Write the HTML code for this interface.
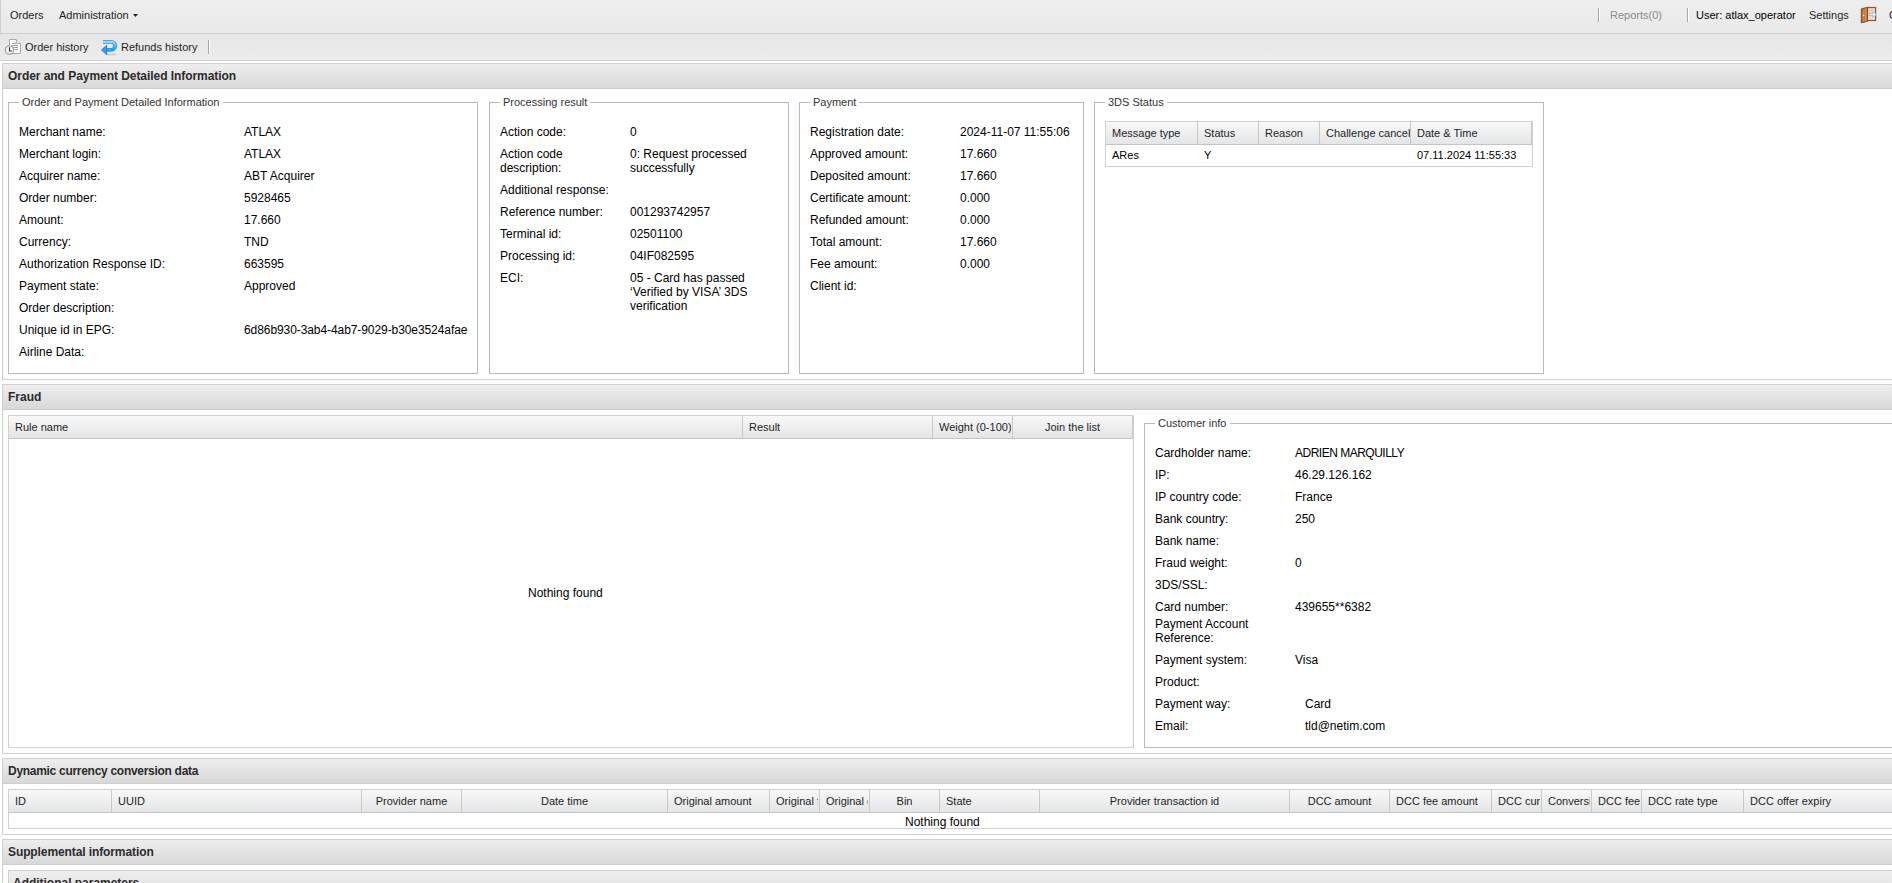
<!DOCTYPE html><html><head><meta charset="utf-8"><style>
*{margin:0;padding:0;box-sizing:border-box}
html,body{width:1892px;height:883px;overflow:hidden;background:#fff}
body{position:relative;font-family:"Liberation Sans",sans-serif;color:#000}
.t{position:absolute;white-space:pre}
.r{position:absolute}
</style></head><body><div class="r" style="left:0px;top:0px;width:1892px;height:34px;background:linear-gradient(#eeeeee,#e9e9e9);border-left:1px solid #d0d0d0;border-bottom:1px solid #d0d0d0"></div>
<div class="t" style="left:10px;top:9px;font-size:11px;line-height:13px;color:#1e1e1e;">Orders</div>
<div class="t" style="left:59px;top:9px;font-size:11px;line-height:13px;color:#1e1e1e;">Administration</div>
<svg class="r" style="left:133px;top:14px" width="6" height="4"><path d="M0,0H5L2.5,3Z" fill="#222"/></svg>
<div class="r" style="left:1598px;top:8px;width:1px;height:14px;background:#aba795"></div>
<div class="r" style="left:1599px;top:8px;width:1px;height:14px;background:#fff"></div>
<div class="t" style="left:1610px;top:9px;font-size:11px;line-height:13px;color:#8c8c8c;">Reports(0)</div>
<div class="r" style="left:1687px;top:8px;width:1px;height:14px;background:#aba795"></div>
<div class="r" style="left:1688px;top:8px;width:1px;height:14px;background:#fff"></div>
<div class="t" style="left:1696px;top:9px;font-size:11px;line-height:13px;color:#000;">User: atlax_operator</div>
<div class="t" style="left:1809px;top:9px;font-size:11px;line-height:13px;color:#1e1e1e;">Settings</div>
<svg class="r" style="left:1860px;top:6px" width="18" height="18" viewBox="0 0 18 18">
<defs><linearGradient id="dg" x1="0" y1="0" x2="1" y2="0"><stop offset="0" stop-color="#b5642e"/><stop offset="1" stop-color="#d48848"/></linearGradient>
<linearGradient id="fg" x1="0" y1="0" x2="1" y2="1"><stop offset="0" stop-color="#c9c9c9"/><stop offset="1" stop-color="#ececec"/></linearGradient></defs>
<rect x="7.3" y="1.5" width="8.3" height="13" fill="url(#fg)" stroke="#9a5026" stroke-width="1.2"/>
<path d="M1.3,16.8 L7.4,15.4 L7.4,1.3 L1.3,2.9 Z" fill="url(#dg)" stroke="#7f3f1c" stroke-width="0.9"/>
<path d="M3.3,3.8 V15.8 M5.4,3.2 V15.3" stroke="#e09a5c" stroke-width="0.7"/>
<path d="M9.5,7.6 H13 V5.6 L16.4,8.4 L13,11.3 V9.3 H9.5 Z" fill="#fafafa" stroke="#a0a0a0" stroke-width="0.7"/>
<rect x="2.9" y="8.8" width="1.3" height="1.3" fill="#f5f5f5"/>
</svg>
<div class="t" style="left:1889px;top:9px;font-size:11px;line-height:13px;color:#1e1e1e;">Change password</div>
<div class="r" style="left:0px;top:34px;width:1892px;height:27px;background:linear-gradient(#e6e6e6,#ececec);border-bottom:1px solid #d0d0d0"></div>
<svg class="r" style="left:4px;top:38px" width="18" height="18" viewBox="0 0 18 18">
<path d="M5.5,1.5 H12.5 L16.5,5.5 V15.5 H5.5 Z" fill="#fbfbfb" stroke="#a8a8a8" stroke-width="1"/>
<path d="M12.5,1.5 V5.5 H16.5" fill="#f4f4f4" stroke="#b0b0b0" stroke-width="1"/>
<path d="M8,5.5 H12.5 M8,7.5 H14 M9,9.5 H14 M10.5,11.5 H14" stroke="#a0a0a0" stroke-width="1"/>
<circle cx="5.5" cy="12" r="4.2" fill="#f3f3ef" stroke="#a6a6a6" stroke-width="1.3"/>
<path d="M5.5,9.3 V13 H8" stroke="#3a3a3a" stroke-width="1.1" fill="none"/>
</svg>
<div class="t" style="left:25px;top:41px;font-size:11px;line-height:13px;color:#1e1e1e;">Order history</div>
<svg class="r" style="left:100px;top:38px" width="18" height="18" viewBox="0 0 18 18">
<defs><linearGradient id="rg" x1="0" y1="0" x2="0" y2="1"><stop offset="0" stop-color="#9ad8fb"/><stop offset="1" stop-color="#16a9f6"/></linearGradient></defs>
<ellipse cx="10.5" cy="16.6" rx="5.5" ry="1" fill="#b8b8b8" opacity="0.55"/>
<path d="M3,3.9 H11.2 A4,4 0 0 1 11.2,11.9 H6.3" stroke="#3b8fdc" stroke-width="3.9" fill="none"/>
<path d="M3,3.9 H11.2 A4,4 0 0 1 11.2,11.9 H6.3" stroke="url(#rg)" stroke-width="2.1" fill="none"/>
<path d="M1.5,12 L6.7,7.2 V16.7 Z" fill="#18a6f4" stroke="#2c7fd0" stroke-width="0.9" stroke-linejoin="round"/>
</svg>
<div class="t" style="left:121px;top:41px;font-size:11px;line-height:13px;color:#1e1e1e;">Refunds history</div>
<div class="r" style="left:208px;top:40px;width:1px;height:14px;background:#aba795"></div>
<div class="r" style="left:209px;top:40px;width:1px;height:14px;background:#fff"></div>
<div class="r" style="left:2px;top:63px;width:1892px;height:317px;border:1px solid #d0d0d0;border-right:none;background:#fff"></div>
<div class="r" style="left:3px;top:64px;width:1891px;height:25px;background:linear-gradient(#eeeeee,#d8d8d8);border-bottom:1px solid #cecece"></div>
<div class="t" style="left:8px;top:69px;font-size:12px;line-height:14px;color:#2b2b2b;font-weight:bold;letter-spacing:-0.05px;">Order and Payment Detailed Information</div>
<div class="r" style="left:8px;top:102px;width:470px;height:272px;border:1px solid #b5b8c8;"></div>
<div class="r" style="left:19px;top:101px;width:204px;height:3px;background:#fff"></div>
<div class="t" style="left:22px;top:96px;font-size:11px;line-height:13px;color:#333;">Order and Payment Detailed Information</div>
<div class="t" style="left:19px;top:125px;font-size:12px;line-height:14px;">Merchant name:</div>
<div class="t" style="left:244px;top:125px;font-size:12px;line-height:14px;">ATLAX</div>
<div class="t" style="left:19px;top:147px;font-size:12px;line-height:14px;">Merchant login:</div>
<div class="t" style="left:244px;top:147px;font-size:12px;line-height:14px;">ATLAX</div>
<div class="t" style="left:19px;top:169px;font-size:12px;line-height:14px;">Acquirer name:</div>
<div class="t" style="left:244px;top:169px;font-size:12px;line-height:14px;">ABT Acquirer</div>
<div class="t" style="left:19px;top:191px;font-size:12px;line-height:14px;">Order number:</div>
<div class="t" style="left:244px;top:191px;font-size:12px;line-height:14px;">5928465</div>
<div class="t" style="left:19px;top:213px;font-size:12px;line-height:14px;">Amount:</div>
<div class="t" style="left:244px;top:213px;font-size:12px;line-height:14px;">17.660</div>
<div class="t" style="left:19px;top:235px;font-size:12px;line-height:14px;">Currency:</div>
<div class="t" style="left:244px;top:235px;font-size:12px;line-height:14px;">TND</div>
<div class="t" style="left:19px;top:257px;font-size:12px;line-height:14px;">Authorization Response ID:</div>
<div class="t" style="left:244px;top:257px;font-size:12px;line-height:14px;">663595</div>
<div class="t" style="left:19px;top:279px;font-size:12px;line-height:14px;">Payment state:</div>
<div class="t" style="left:244px;top:279px;font-size:12px;line-height:14px;">Approved</div>
<div class="t" style="left:19px;top:301px;font-size:12px;line-height:14px;">Order description:</div>
<div class="t" style="left:19px;top:323px;font-size:12px;line-height:14px;">Unique id in EPG:</div>
<div class="t" style="left:244px;top:323px;font-size:12px;line-height:14px;letter-spacing:-0.08px;">6d86b930-3ab4-4ab7-9029-b30e3524afae</div>
<div class="t" style="left:19px;top:345px;font-size:12px;line-height:14px;">Airline Data:</div>
<div class="r" style="left:489px;top:102px;width:300px;height:272px;border:1px solid #b5b8c8;"></div>
<div class="r" style="left:500px;top:101px;width:90px;height:3px;background:#fff"></div>
<div class="t" style="left:503px;top:96px;font-size:11px;line-height:13px;color:#333;">Processing result</div>
<div class="t" style="left:500px;top:125px;font-size:12px;line-height:14px;">Action code:</div>
<div class="t" style="left:630px;top:125px;font-size:12px;line-height:14px;">0</div>
<div class="t" style="left:500px;top:147px;font-size:12px;line-height:14px;">Action code</div>
<div class="t" style="left:500px;top:161px;font-size:12px;line-height:14px;">description:</div>
<div class="t" style="left:630px;top:147px;font-size:12px;line-height:14px;">0: Request processed</div>
<div class="t" style="left:630px;top:161px;font-size:12px;line-height:14px;">successfully</div>
<div class="t" style="left:500px;top:183px;font-size:12px;line-height:14px;">Additional response:</div>
<div class="t" style="left:500px;top:205px;font-size:12px;line-height:14px;">Reference number:</div>
<div class="t" style="left:630px;top:205px;font-size:12px;line-height:14px;">001293742957</div>
<div class="t" style="left:500px;top:227px;font-size:12px;line-height:14px;">Terminal id:</div>
<div class="t" style="left:630px;top:227px;font-size:12px;line-height:14px;">02501100</div>
<div class="t" style="left:500px;top:249px;font-size:12px;line-height:14px;">Processing id:</div>
<div class="t" style="left:630px;top:249px;font-size:12px;line-height:14px;">04IF082595</div>
<div class="t" style="left:500px;top:271px;font-size:12px;line-height:14px;">ECI:</div>
<div class="t" style="left:630px;top:271px;font-size:12px;line-height:14px;">05 - Card has passed</div>
<div class="t" style="left:630px;top:285px;font-size:12px;line-height:14px;">‘Verified by VISA’ 3DS</div>
<div class="t" style="left:630px;top:299px;font-size:12px;line-height:14px;">verification</div>
<div class="r" style="left:799px;top:102px;width:285px;height:272px;border:1px solid #b5b8c8;"></div>
<div class="r" style="left:810px;top:101px;width:49px;height:3px;background:#fff"></div>
<div class="t" style="left:813px;top:96px;font-size:11px;line-height:13px;color:#333;">Payment</div>
<div class="t" style="left:810px;top:125px;font-size:12px;line-height:14px;">Registration date:</div>
<div class="t" style="left:960px;top:125px;font-size:12px;line-height:14px;">2024-11-07 11:55:06</div>
<div class="t" style="left:810px;top:147px;font-size:12px;line-height:14px;">Approved amount:</div>
<div class="t" style="left:960px;top:147px;font-size:12px;line-height:14px;">17.660</div>
<div class="t" style="left:810px;top:169px;font-size:12px;line-height:14px;">Deposited amount:</div>
<div class="t" style="left:960px;top:169px;font-size:12px;line-height:14px;">17.660</div>
<div class="t" style="left:810px;top:191px;font-size:12px;line-height:14px;">Certificate amount:</div>
<div class="t" style="left:960px;top:191px;font-size:12px;line-height:14px;">0.000</div>
<div class="t" style="left:810px;top:213px;font-size:12px;line-height:14px;">Refunded amount:</div>
<div class="t" style="left:960px;top:213px;font-size:12px;line-height:14px;">0.000</div>
<div class="t" style="left:810px;top:235px;font-size:12px;line-height:14px;">Total amount:</div>
<div class="t" style="left:960px;top:235px;font-size:12px;line-height:14px;">17.660</div>
<div class="t" style="left:810px;top:257px;font-size:12px;line-height:14px;">Fee amount:</div>
<div class="t" style="left:960px;top:257px;font-size:12px;line-height:14px;">0.000</div>
<div class="t" style="left:810px;top:279px;font-size:12px;line-height:14px;">Client id:</div>
<div class="r" style="left:1094px;top:102px;width:450px;height:272px;border:1px solid #b5b8c8;"></div>
<div class="r" style="left:1105px;top:101px;width:62px;height:3px;background:#fff"></div>
<div class="t" style="left:1108px;top:96px;font-size:11px;line-height:13px;color:#333;">3DS Status</div>
<div class="r" style="left:1105px;top:121px;width:428px;height:46px;border:1px solid #d0d0d0"></div>
<div class="r" style="left:1106px;top:122px;width:426px;height:22px;background:linear-gradient(#f8f8f8,#e4e5e7)"></div>
<div class="r" style="left:1106px;top:144px;width:426px;height:1px;background:#c5c5c5"></div>
<div class="r" style="left:1197px;top:122px;width:1px;height:22px;background:#c9c9c9"></div>
<div class="r" style="left:1258px;top:122px;width:1px;height:22px;background:#c9c9c9"></div>
<div class="r" style="left:1319px;top:122px;width:1px;height:22px;background:#c9c9c9"></div>
<div class="r" style="left:1410px;top:122px;width:1px;height:22px;background:#c9c9c9"></div>
<div class="r" style="left:1531px;top:122px;width:1px;height:22px;background:#c9c9c9"></div>
<div class="t" style="left:1112px;top:127px;font-size:11px;line-height:13px;color:#1f1f1f;">Message type</div>
<div class="t" style="left:1204px;top:127px;font-size:11px;line-height:13px;color:#1f1f1f;">Status</div>
<div class="t" style="left:1265px;top:127px;font-size:11px;line-height:13px;color:#1f1f1f;">Reason</div>
<div class="t" style="left:1326px;top:127px;font-size:11px;line-height:13px;color:#1f1f1f;width:84px;overflow:hidden;">Challenge cancel</div>
<div class="t" style="left:1417px;top:127px;font-size:11px;line-height:13px;color:#1f1f1f;">Date &amp; Time</div>
<div class="t" style="left:1112px;top:149px;font-size:11px;line-height:13px;">ARes</div>
<div class="t" style="left:1204px;top:149px;font-size:11px;line-height:13px;">Y</div>
<div class="t" style="left:1417px;top:149px;font-size:11px;line-height:13px;">07.11.2024 11:55:33</div>
<div class="r" style="left:2px;top:384px;width:1892px;height:370px;border:1px solid #d0d0d0;border-right:none;background:#fff"></div>
<div class="r" style="left:3px;top:385px;width:1891px;height:25px;background:linear-gradient(#eeeeee,#d8d8d8);border-bottom:1px solid #cecece"></div>
<div class="t" style="left:8px;top:390px;font-size:12px;line-height:14px;color:#2b2b2b;font-weight:bold;letter-spacing:0px;">Fraud</div>
<div class="r" style="left:8px;top:415px;width:1126px;height:333px;border:1px solid #d0d0d0"></div>
<div class="r" style="left:9px;top:416px;width:1124px;height:22px;background:linear-gradient(#f8f8f8,#e4e5e7)"></div>
<div class="r" style="left:9px;top:438px;width:1124px;height:1px;background:#c5c5c5"></div>
<div class="r" style="left:742px;top:416px;width:1px;height:22px;background:#c9c9c9"></div>
<div class="r" style="left:932px;top:416px;width:1px;height:22px;background:#c9c9c9"></div>
<div class="r" style="left:1012px;top:416px;width:1px;height:22px;background:#c9c9c9"></div>
<div class="r" style="left:1132px;top:416px;width:1px;height:22px;background:#c9c9c9"></div>
<div class="t" style="left:15px;top:421px;font-size:11px;line-height:13px;color:#1f1f1f;">Rule name</div>
<div class="t" style="left:749px;top:421px;font-size:11px;line-height:13px;color:#1f1f1f;">Result</div>
<div class="t" style="left:939px;top:421px;font-size:11px;line-height:13px;color:#1f1f1f;width:72px;overflow:hidden;">Weight (0-100)</div>
<div class="t" style="left:1013px;top:421px;font-size:11px;line-height:13px;color:#1f1f1f;width:119px;overflow:hidden;text-align:center;">Join the list</div>
<div class="t" style="left:528px;top:586px;font-size:12px;line-height:14px;">Nothing found</div>
<div class="r" style="left:1144px;top:423px;width:757px;height:325px;border:1px solid #b5b8c8;border-right:none;"></div>
<div class="r" style="left:1155px;top:422px;width:75px;height:3px;background:#fff"></div>
<div class="t" style="left:1158px;top:417px;font-size:11px;line-height:13px;color:#333;">Customer info</div>
<div class="t" style="left:1155px;top:446px;font-size:12px;line-height:14px;">Cardholder name:</div>
<div class="t" style="left:1295px;top:446px;font-size:12px;line-height:14px;letter-spacing:-0.5px;">ADRIEN MARQUILLY</div>
<div class="t" style="left:1155px;top:468px;font-size:12px;line-height:14px;">IP:</div>
<div class="t" style="left:1295px;top:468px;font-size:12px;line-height:14px;">46.29.126.162</div>
<div class="t" style="left:1155px;top:490px;font-size:12px;line-height:14px;">IP country code:</div>
<div class="t" style="left:1295px;top:490px;font-size:12px;line-height:14px;">France</div>
<div class="t" style="left:1155px;top:512px;font-size:12px;line-height:14px;">Bank country:</div>
<div class="t" style="left:1295px;top:512px;font-size:12px;line-height:14px;">250</div>
<div class="t" style="left:1155px;top:534px;font-size:12px;line-height:14px;">Bank name:</div>
<div class="t" style="left:1155px;top:556px;font-size:12px;line-height:14px;">Fraud weight:</div>
<div class="t" style="left:1295px;top:556px;font-size:12px;line-height:14px;">0</div>
<div class="t" style="left:1155px;top:578px;font-size:12px;line-height:14px;">3DS/SSL:</div>
<div class="t" style="left:1155px;top:600px;font-size:12px;line-height:14px;">Card number:</div>
<div class="t" style="left:1295px;top:600px;font-size:12px;line-height:14px;">439655**6382</div>
<div class="t" style="left:1155px;top:617px;font-size:12px;line-height:14px;">Payment Account</div>
<div class="t" style="left:1155px;top:631px;font-size:12px;line-height:14px;">Reference:</div>
<div class="t" style="left:1155px;top:653px;font-size:12px;line-height:14px;">Payment system:</div>
<div class="t" style="left:1295px;top:653px;font-size:12px;line-height:14px;">Visa</div>
<div class="t" style="left:1155px;top:675px;font-size:12px;line-height:14px;">Product:</div>
<div class="t" style="left:1155px;top:697px;font-size:12px;line-height:14px;">Payment way:</div>
<div class="t" style="left:1305px;top:697px;font-size:12px;line-height:14px;">Card</div>
<div class="t" style="left:1155px;top:719px;font-size:12px;line-height:14px;">Email:</div>
<div class="t" style="left:1305px;top:719px;font-size:12px;line-height:14px;">tld@netim.com</div>
<div class="r" style="left:2px;top:758px;width:1892px;height:77px;border:1px solid #d0d0d0;border-right:none;background:#fff"></div>
<div class="r" style="left:3px;top:759px;width:1891px;height:25px;background:linear-gradient(#eeeeee,#d8d8d8);border-bottom:1px solid #cecece"></div>
<div class="t" style="left:8px;top:764px;font-size:12px;line-height:14px;color:#2b2b2b;font-weight:bold;letter-spacing:-0.29px;">Dynamic currency conversion data</div>
<div class="r" style="left:8px;top:789px;width:1892px;height:40px;border:1px solid #d0d0d0;border-right:none"></div>
<div class="r" style="left:9px;top:790px;width:1891px;height:22px;background:linear-gradient(#f8f8f8,#e4e5e7)"></div>
<div class="r" style="left:9px;top:812px;width:1891px;height:1px;background:#c5c5c5"></div>
<div class="r" style="left:111px;top:790px;width:1px;height:22px;background:#c9c9c9"></div>
<div class="r" style="left:361px;top:790px;width:1px;height:22px;background:#c9c9c9"></div>
<div class="r" style="left:461px;top:790px;width:1px;height:22px;background:#c9c9c9"></div>
<div class="r" style="left:667px;top:790px;width:1px;height:22px;background:#c9c9c9"></div>
<div class="r" style="left:769px;top:790px;width:1px;height:22px;background:#c9c9c9"></div>
<div class="r" style="left:819px;top:790px;width:1px;height:22px;background:#c9c9c9"></div>
<div class="r" style="left:869px;top:790px;width:1px;height:22px;background:#c9c9c9"></div>
<div class="r" style="left:939px;top:790px;width:1px;height:22px;background:#c9c9c9"></div>
<div class="r" style="left:1039px;top:790px;width:1px;height:22px;background:#c9c9c9"></div>
<div class="r" style="left:1289px;top:790px;width:1px;height:22px;background:#c9c9c9"></div>
<div class="r" style="left:1389px;top:790px;width:1px;height:22px;background:#c9c9c9"></div>
<div class="r" style="left:1491px;top:790px;width:1px;height:22px;background:#c9c9c9"></div>
<div class="r" style="left:1541px;top:790px;width:1px;height:22px;background:#c9c9c9"></div>
<div class="r" style="left:1591px;top:790px;width:1px;height:22px;background:#c9c9c9"></div>
<div class="r" style="left:1641px;top:790px;width:1px;height:22px;background:#c9c9c9"></div>
<div class="r" style="left:1743px;top:790px;width:1px;height:22px;background:#c9c9c9"></div>
<div class="t" style="left:15px;top:795px;font-size:11px;line-height:13px;color:#1f1f1f;">ID</div>
<div class="t" style="left:118px;top:795px;font-size:11px;line-height:13px;color:#1f1f1f;">UUID</div>
<div class="t" style="left:362px;top:795px;font-size:11px;line-height:13px;color:#1f1f1f;width:99px;overflow:hidden;text-align:center;">Provider name</div>
<div class="t" style="left:462px;top:795px;font-size:11px;line-height:13px;color:#1f1f1f;width:205px;overflow:hidden;text-align:center;">Date time</div>
<div class="t" style="left:674px;top:795px;font-size:11px;line-height:13px;color:#1f1f1f;">Original amount</div>
<div class="t" style="left:776px;top:795px;font-size:11px;line-height:13px;color:#1f1f1f;width:42px;overflow:hidden;">Original fee</div>
<div class="t" style="left:826px;top:795px;font-size:11px;line-height:13px;color:#1f1f1f;width:42px;overflow:hidden;">Original currency</div>
<div class="t" style="left:870px;top:795px;font-size:11px;line-height:13px;color:#1f1f1f;width:69px;overflow:hidden;text-align:center;">Bin</div>
<div class="t" style="left:946px;top:795px;font-size:11px;line-height:13px;color:#1f1f1f;">State</div>
<div class="t" style="left:1040px;top:795px;font-size:11px;line-height:13px;color:#1f1f1f;width:249px;overflow:hidden;text-align:center;">Provider transaction id</div>
<div class="t" style="left:1290px;top:795px;font-size:11px;line-height:13px;color:#1f1f1f;width:99px;overflow:hidden;text-align:center;">DCC amount</div>
<div class="t" style="left:1396px;top:795px;font-size:11px;line-height:13px;color:#1f1f1f;">DCC fee amount</div>
<div class="t" style="left:1498px;top:795px;font-size:11px;line-height:13px;color:#1f1f1f;width:42px;overflow:hidden;">DCC currency</div>
<div class="t" style="left:1548px;top:795px;font-size:11px;line-height:13px;color:#1f1f1f;width:42px;overflow:hidden;">Conversion rate</div>
<div class="t" style="left:1598px;top:795px;font-size:11px;line-height:13px;color:#1f1f1f;width:42px;overflow:hidden;">DCC fee</div>
<div class="t" style="left:1648px;top:795px;font-size:11px;line-height:13px;color:#1f1f1f;">DCC rate type</div>
<div class="t" style="left:1750px;top:795px;font-size:11px;line-height:13px;color:#1f1f1f;">DCC offer expiry</div>
<div class="t" style="left:905px;top:815px;font-size:12px;line-height:14px;">Nothing found</div>
<div class="r" style="left:2px;top:839px;width:1892px;height:62px;border:1px solid #d0d0d0;border-right:none;background:#fff"></div>
<div class="r" style="left:3px;top:840px;width:1891px;height:25px;background:linear-gradient(#eeeeee,#d8d8d8);border-bottom:1px solid #cecece"></div>
<div class="t" style="left:8px;top:845px;font-size:12px;line-height:14px;color:#2b2b2b;font-weight:bold;letter-spacing:-0.1px;">Supplemental information</div>
<div class="r" style="left:8px;top:870px;width:1892px;height:40px;border:1px solid #d0d0d0;border-right:none;background:linear-gradient(#eeeeee,#d8d8d8)"></div>
<div class="t" style="left:13px;top:876px;font-size:12px;line-height:14px;color:#2b2b2b;font-weight:bold;letter-spacing:-0.02px;">Additional parameters</div></body></html>
